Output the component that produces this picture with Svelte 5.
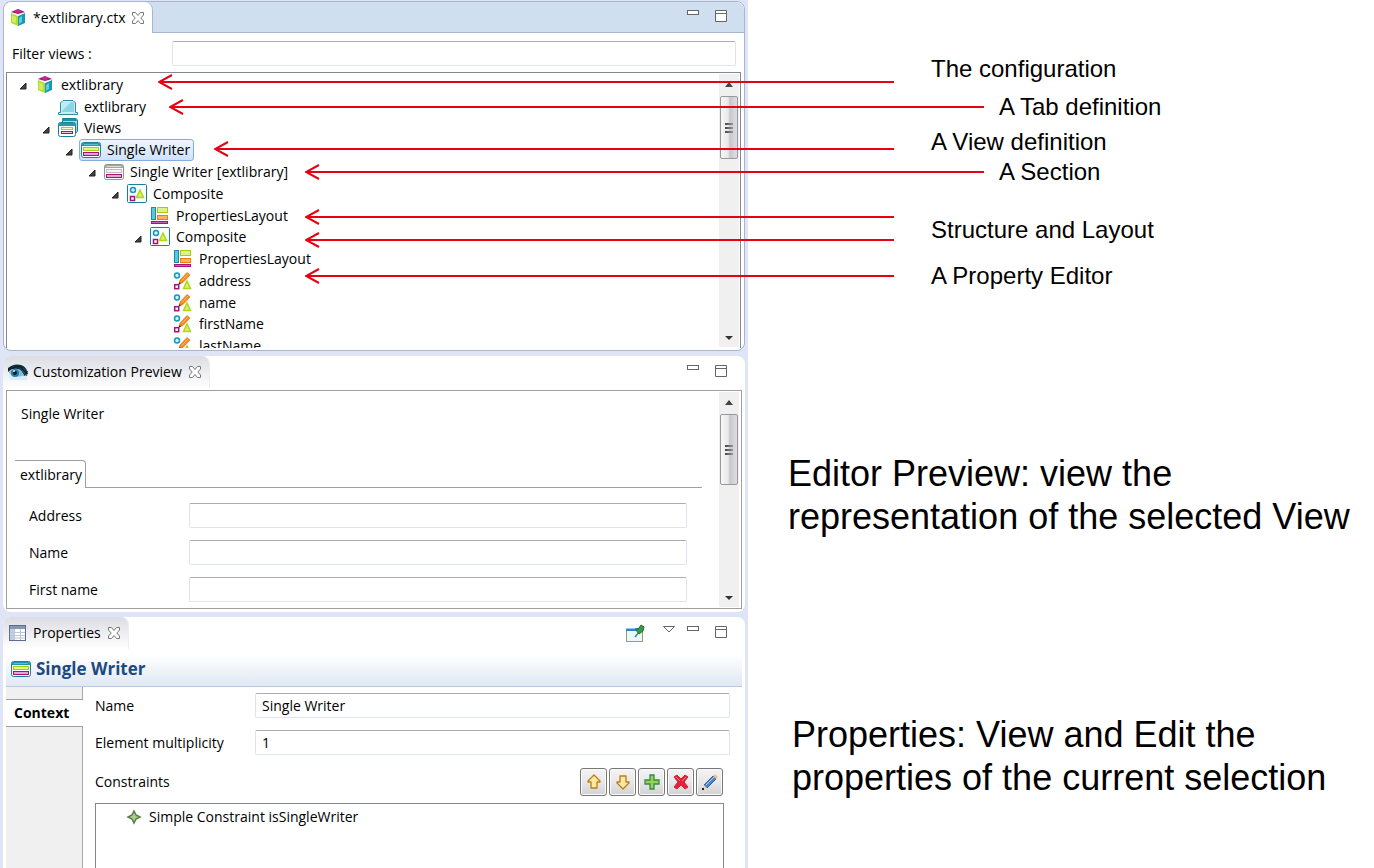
<script>
  const tree = [
    { level: 0, icon: 'cube', label: 'extlibrary', open: true },
    { level: 1, icon: 'tab', label: 'extlibrary' },
    { level: 1, icon: 'views', label: 'Views', open: true },
    { level: 2, icon: 'view', label: 'Single Writer', open: true },
    { level: 3, icon: 'section', label: 'Single Writer [extlibrary]', open: true },
    { level: 4, icon: 'composite', label: 'Composite', open: true },
    { level: 5, icon: 'layout', label: 'PropertiesLayout' },
    { level: 5, icon: 'composite', label: 'Composite', open: true },
    { level: 6, icon: 'layout', label: 'PropertiesLayout' },
    { level: 6, icon: 'editor', label: 'address' },
    { level: 6, icon: 'editor', label: 'name' },
    { level: 6, icon: 'editor', label: 'firstName' },
    { level: 6, icon: 'editor', label: 'lastName' }
  ];
  let selected = $state(3);
  let filter = $state('');
  let name = $state('Single Writer');
  let multiplicity = $state('1');

  const previewFields = [
    { id: 'p-address', label: 'Address' },
    { id: 'p-name', label: 'Name' },
    { id: 'p-first', label: 'First name' }
  ];

  const arrows = [
    { x: 158, y: 82 },
    { x: 169, y: 107, long: true },
    { x: 214, y: 149 },
    { x: 305, y: 172, long: true },
    { x: 305, y: 217 },
    { x: 305, y: 240 },
    { x: 305, y: 276 }
  ];

  const actions = [
    { icon: 'up', label: 'Move up' },
    { icon: 'down', label: 'Move down' },
    { icon: 'add', label: 'Add' },
    { icon: 'remove', label: 'Remove' },
    { icon: 'edit', label: 'Edit' }
  ];
</script>

{#snippet icon(kind)}
  <svg class="icon" viewBox="0 0 20 20" aria-hidden="true">
    {#if kind === 'cube'}
      <path d="M3 5 L10 8 V18 L3 15Z" fill="#b5dc28" />
      <path d="M17 5 L10 8 V18 L17 15Z" fill="#1599b8" />
      <path d="M11 10 L14 8 V14 L11 16Z" fill="#62cde2" />
      <path d="M4 7 L8 9 V15 L4 14Z" fill="#cdee60" />
      <path d="M2 4 L10 1 L18 4 L10 8Z" fill="#f3f3f3" />
      <path d="M3 4 L10 1 L17 4 L10 6Z" fill="#a8107c" />
      <path d="M7 2h6v2l-3 1-3-1z" fill="#c02c93" />
    {:else if kind === 'tab'}
      <path d="M.5 17.500 V15.500 H2.500 V6 L5 3.500 H15 L17.500 6 V15.500 H19.500 V17.500Z" fill="#c9edf5" stroke="#2d8ea3" />
      <path d="M4 6 L6 5 H14 L16 6 V15 H4Z" fill="#8bd5e7" />
      <path d="M4 14 L13 5 H6 L4 6Z" fill="#c2eaf3" />
    {:else if kind === 'views'}
      <path d="M4.500 .5H17q2.500 0 2.500 2.500V13l-2 2.500H4.500z" fill="#9fdbe8" stroke="#197f95" />
      <path d="M4 1H18L19 3H4Z" fill="#2190a7" />
      <rect x=".5" y="4.500" width="17" height="14" rx="2" fill="#fff" stroke="#197f95" />
      <path d="M1 8V5H17V8Z" fill="#2498b0" />
      <rect x="3.500" y="9.500" width="11" height="2" fill="#f6fbd9" stroke="#a8cf18" />
      <rect x="3.500" y="13.500" width="11" height="2" fill="#efc3e2" stroke="#a8107c" />
    {:else if kind === 'view' || kind === 'section'}
      {@const on = kind === 'view'}
      <rect x=".5" y="2.500" width="19" height="15" rx="2" fill="#fff" stroke={on ? '#1c8196' : '#929292'} />
      <path d="M1 6V4q0-1 1-1h16q1 0 1 1v2z" fill={on ? '#2397ae' : '#a5a5a5'} />
      <path d="M3 4.500h14" stroke={on ? '#5cbfd0' : '#dcdcdc'} />
      <rect x="2.500" y="7.500" width="15" height="3" fill={on ? '#dff48e' : '#f6f6f6'} stroke={on ? '#a3cc10' : '#bdbdbd'} />
      <rect x="2.500" y="12.500" width="15" height="3" fill="#dfa8d0" stroke="#a8107c" />
    {:else if kind === 'composite'}
      <rect x=".5" y=".5" width="19" height="18" rx="1" fill="#f8feff" stroke="#197f95" />
      <circle cx="6" cy="6" r="2.500" fill="#d0f1f8" stroke="#1599b8" stroke-width="1.500" />
      <rect x="3.500" y="12.500" width="4" height="4" fill="#fff" stroke="#a8107c" stroke-width="1.500" />
      <path d="M13 6 L16.500 13.500 H9.500Z" fill="#d7ef78" stroke="#b1d813" stroke-width="1.500" />
    {:else if kind === 'layout'}
      <rect x="1.500" y="1.500" width="4" height="12" fill="#5cc6dc" stroke="#188fa9" />
      <rect x="7.500" y="1.500" width="10" height="5" fill="#dcf28a" stroke="#a3cc10" />
      <rect x="7.500" y="9.500" width="10" height="4" fill="#ffb25e" stroke="#f07d10" />
      <rect x="1.500" y="15.500" width="16" height="2" fill="#c763aa" stroke="#a8107c" />
    {:else if kind === 'editor'}
      <circle cx="4" cy="4.500" r="2.500" fill="#d0f1f8" stroke="#1599b8" stroke-width="1.500" />
      <rect x="1.700" y="13.700" width="4" height="4" fill="#fff" stroke="#a8107c" stroke-width="1.500" />
      <path d="M14 10 L17.500 17.500 H10.500Z" fill="#d7ef78" stroke="#b1d813" stroke-width="1.500" />
      <path d="M6 13 L7 9 L14 1.500 L17 4 L10 11.500Z" fill="#f28a20" stroke="#d9741a" stroke-width=".7" />
      <path d="M9 9.500 L15 3" stroke="#ffc078" />
      <path d="M5.500 13.700 L6.500 11 L8 12.500Z" fill="#333" />
    {:else if kind === 'eye'}
      <path d="M0 2H19V18H2Z" fill="#d5edf6" />
      <path d="M0 6Q6 1 13 3Q19 5 20 12L16 14Q14 8 9 7Q4 6 0 10Z" fill="#162630" />
      <path d="M1 10Q5 6 10 7Q14 8 16 13Q9 17 2 12Z" fill="#78bfdd" />
      <circle cx="7" cy="11" r="4" fill="#287da7" />
      <circle cx="7" cy="11" r="2" fill="#081c29" />
      <circle cx="6" cy="9" r="1" fill="#def7ff" />
      <path d="M14 8L19 14M15 6L20 10M12 6L16 12" stroke="#23576e" />
    {:else if kind === 'table'}
      <rect x="1.500" y="2.500" width="16" height="15" fill="#fff" stroke="#5a6e91" />
      <rect x="2" y="3" width="15" height="3" fill="#8796b4" />
      <rect x="2" y="6" width="4" height="11" fill="#c5cede" />
      <path d="M6.500 6V17M12.500 6V17M2 9.500H17M2 12.500H17M2 15H17" stroke="#bcc6d6" />
    {:else if kind === 'pin'}
      <rect x="1.500" y="4.500" width="16" height="13" fill="#e8f9fd" stroke="#a19767" />
      <path d="M1 4H17V7H1Z" fill="#3e7ec1" />
      <path d="M1 4H10V5H1Z" fill="#9ccaf0" />
      <path d="M10 13L14 8" stroke="#5f7784" stroke-width="1.500" />
      <path d="M11 6L14 4L16 1L19 3L18 7L14 10Z" fill="#3b9945" stroke="#1d742d" />
    {:else if kind === 'up' || kind === 'down'}
      <path d={kind === 'up' ? 'M10 3L16 9V10H13V16H7V10H4V9Z' : 'M10 17L16 11V10H13V4H7V10H4V11Z'} fill="#ffe9a0" stroke="#bd7c18" stroke-width="1.300" stroke-linejoin="round" />
    {:else if kind === 'add'}
      <path d="M8 3H12V8H17V12H12V17H8V12H3V8H8Z" fill="#9bd053" stroke="#338a4a" stroke-width="1.300" />
    {:else if kind === 'remove'}
      <path d="M3 5L6 3L10 7L14 3L17 5L13 10L17 15L14 17L10 13L6 17L3 15L7 10Z" fill="#e5213c" stroke="#c22a36" />
      <path d="M5 5L9 9M15 5L11 9" stroke="#f58179" />
    {:else if kind === 'edit'}
      <path d="M4 13L13 4L16 7L7 16Z" fill="#4e87ce" stroke="#315b9f" />
      <path d="M6 13L14 5" stroke="#a7d2f5" />
      <path d="M13 4L15 2L18 5L16 7Z" fill="#edc283" />
      <path d="M4 13L7 16L3 17Z" fill="#efd49c" /><path d="M2 16h2v2H2z" fill="#222" />
    {:else if kind === 'star'}
      <path d="M10 4L12 8L16 10L12 12L10 16L8 12L4 10L8 8Z" fill="#a8cd8c" stroke="#5b7e45" stroke-width="1.500" />
    {/if}
  </svg>
{/snippet}

{#snippet close()}
  <button class="plain close" aria-label="Close">
    <svg viewBox="0 0 14 14" width="14" height="14"><path d="M1.500 1.500H4.500L7 4.500L9.500 1.500H12.500V4L9.800 7L12.500 10V12.500H9.500L7 9.500L4.500 12.500H1.500V10L4.200 7L1.500 4Z" fill="#fff" stroke="#777" /></svg>
  </button>
{/snippet}

{#snippet windowTools()}
  <button class="plain" aria-label="Minimize">
    <svg viewBox="0 0 14 14" width="14" height="14"><rect x="1.500" y="1.500" width="11" height="4" fill="#fff" stroke="#666" /></svg>
  </button>
  <button class="plain" aria-label="Maximize">
    <svg viewBox="0 0 14 14" width="14" height="14"><path d="M1.500 1.500H12.500V12.500H1.500ZM1.500 4.500H12.500" fill="#fff" stroke="#666" /></svg>
  </button>
{/snippet}

{#snippet scrollbar(size)}
  <div class="scrollbar" aria-hidden="true">
    <svg width="10" height="6" viewBox="0 0 10 6"><path d="M5 0L9 5H1Z" fill="#444" /></svg>
    <div class="thumb {size}"><i></i><i></i><i></i></div>
    <svg class="end" width="10" height="6" viewBox="0 0 10 6"><path d="M5 5L9 1H1Z" fill="#333" /></svg>
  </div>
{/snippet}

<main class="page">
  <div class="workbench">
    <section class="panel editor">
      <header class="bar">
        <div class="tab">{@render icon('cube')}<span>*extlibrary.ctx</span>{@render close()}</div>
        <div class="tools">{@render windowTools()}</div>
      </header>
      <div class="filter">
        <label for="filter">Filter views :</label>
        <input id="filter" type="text" bind:value={filter} />
      </div>
      <div class="box treebox">
        <ul class="tree" role="tree">
          {#each tree as node, i}
            <li role="treeitem" aria-selected={selected === i} aria-expanded={node.open} style="--level:{node.level}">
              <span class="twisty">
                {#if node.open}<svg width="8" height="8" viewBox="0 0 8 8"><path d="M7 1V7H1Z" fill="#444" stroke="#222" /></svg>{/if}
              </span>
              <button class="node" class:selected={selected === i} onclick={() => (selected = i)}>
                {@render icon(node.icon)}<span>{node.label}</span>
              </button>
            </li>
          {/each}
        </ul>
        {@render scrollbar('short')}
      </div>
    </section>

    <section class="panel preview">
      <header class="bar">
        <div class="tab">{@render icon('eye')}<span>Customization Preview</span>{@render close()}</div>
        <div class="tools">{@render windowTools()}</div>
      </header>
      <div class="box">
        <div class="sheet">
          <p>Single Writer</p>
          <div class="strip"><button class="plain striptab">extlibrary</button></div>
          <div class="fields">
            {#each previewFields as f}
              <label for={f.id}>{f.label}</label>
              <input id={f.id} type="text" />
            {/each}
          </div>
        </div>
        {@render scrollbar('long')}
      </div>
    </section>

    <section class="panel properties">
      <header class="bar">
        <div class="tab">{@render icon('table')}<span>Properties</span>{@render close()}</div>
        <div class="tools">
          <button class="plain pin" aria-label="Pin to selection">{@render icon('pin')}</button>
          <button class="plain menu" aria-label="View menu">
            <svg viewBox="0 0 14 14" width="14" height="14"><path d="M1.500 1.500H12.500L7 7Z" fill="#fff" stroke="#666" /></svg>
          </button>
          {@render windowTools()}
        </div>
      </header>
      <h2>{@render icon('view')}<span>Single Writer</span></h2>
      <div class="body">
        <nav><button class="category">Context</button></nav>
        <div class="form">
          <div class="fields">
            <label for="name">Name</label>
            <input id="name" type="text" bind:value={name} />
            <label for="mult">Element multiplicity</label>
            <input id="mult" type="text" bind:value={multiplicity} />
          </div>
          <div class="constraints">
            <span>Constraints</span>
            <div class="actions">
              {#each actions as a}
                <button aria-label={a.label}>{@render icon(a.icon)}</button>
              {/each}
            </div>
          </div>
          <ul class="list"><li>{@render icon('star')}<span>Simple Constraint isSingleWriter</span></li></ul>
        </div>
      </div>
    </section>
  </div>

  <aside class="notes">
    <ul class="callouts">
      <li>The configuration</li>
      <li class="far">A Tab definition</li>
      <li>A View definition</li>
      <li class="far">A Section</li>
      <li>Structure and Layout</li>
      <li>A Property Editor</li>
    </ul>
    <p class="about">Editor Preview: view the<br />representation of the selected View</p>
    <p class="about second">Properties: View and Edit the<br />properties of the current selection</p>
  </aside>

  {#each arrows as a}
    <div class="arrow" class:long={a.long} style="left:{a.x}px;top:{a.y - 8}px">
      <svg width="16" height="16" viewBox="0 0 16 16"><path d="M14 1L1 8L14 15" fill="none" stroke="#e60012" stroke-width="2" /></svg>
    </div>
  {/each}
</main>

<style>
  :global(body) { margin: 0; background: #fff; }
  * { box-sizing: border-box; }
  ul, p, h2 { margin: 0; padding: 0; list-style: none; }
  .page {
    position: relative;
    display: grid;
    grid-template-columns: 748fr 626fr;
    height: 100vh;
    overflow: hidden;
    color: #000;
    font: 14px/20px "Open Sans", "Noto Sans", sans-serif;
  }
  button, input { font: inherit; color: inherit; }
  .plain { border: 0; padding: 0; background: none; display: flex; }
  .icon { width: 20px; height: 20px; flex: none; }
  svg { display: block; flex: none; }

  .workbench {
    display: flex;
    flex-direction: column;
    gap: 5px;
    min-height: 0;
    padding: 1px 3px 0;
    background: #dfe5f6;
  }
  .panel {
    display: flex;
    flex-direction: column;
    background: #fff;
    border-radius: 8px;
    padding: 0 3px 3px;
  }
  .bar { display: flex; justify-content: space-between; height: 34px; margin: 0 -3px; flex: none; }
  .tab {
    display: flex;
    align-items: center;
    gap: 5px;
    height: 32px;
    padding: 0 7px 0 5px;
    border-radius: 8px 8px 0 0;
    background: linear-gradient(#dcdde3, #fff);
    border-right: 1px solid #ecedf2;
    white-space: nowrap;
  }
  .close { margin-left: 1px; }
  .tools { display: flex; gap: 14px; padding: 8px 17px 0 0; }
  .pin { margin: -1px 3px 0 0; height: 20px; }
  .menu { margin-right: -4px; }
  .box { display: flex; border: 1px solid #a0a0a4; padding: 2px; }

  .editor { height: 350px; border: 1px solid #a9b5cd; padding: 0 3px 2px 2px; }
  .editor .bar {
    height: 31px;
    margin: 0 -3px 0 -2px;
    background: #cfdfef;
    border-bottom: 1px solid #a9b5cd;
    border-radius: 8px 8px 0 0;
  }
  .editor .tab { height: 31px; background: #fff; border-right: 1px solid #a9b5cd; padding-left: 4px; }
  .editor .tools { padding: 7px 16px 0 0; }
  .filter { display: grid; grid-template-columns: 160px 1fr; align-items: center; padding: 8px 5px 6px 6px; }
  input {
    width: 100%;
    height: 25px;
    padding: 0 6px;
    border: 1px solid #dfe3ec;
    border-top-color: #abadb3;
    border-radius: 2px;
    background: #fff;
    outline: 0;
  }
  .treebox { flex: 1; min-height: 0; overflow: hidden; border-color: #828790; border-bottom: 0; padding: 1px 1px 1px 0; }
  .tree {
    display: grid;
    grid-auto-rows: 1fr;
    height: 283px;
    flex: 1;
  }
  .tree li { display: flex; align-items: center; padding-left: calc(12px + 23px * var(--level)); min-height: 0; }
  .twisty { width: 14px; padding-top: 3px; }
  .node {
    display: flex;
    align-items: center;
    gap: 6px;
    height: 22px;
    padding: 0 3px 0 1px;
    border: 1px solid transparent;
    border-radius: 3px;
    background: none;
    white-space: nowrap;
  }
  .node.selected { border-color: #84acdd; background: linear-gradient(#eef5fe, #cfe2fb); }

  .scrollbar {
    display: flex;
    flex-direction: column;
    align-items: center;
    gap: 8px;
    width: 20px;
    padding: 8px 0 6px;
    background: #f0f0f1;
    flex: none;
  }
  .end { margin-top: auto; }
  .thumb {
    display: flex;
    flex-direction: column;
    align-items: center;
    justify-content: center;
    gap: 2px;
    width: 18px;
    border: 1px solid #98989c;
    border-radius: 2px;
    background: linear-gradient(90deg, #f7f7f7, #e8e8ea 45%, #c6c6cc 55%, #dedee2);
  }
  .thumb i { width: 8px; height: 2px; background: linear-gradient(90deg, #444, #999); }
  .short { height: 63px; }
  .long { height: 71px; }

  .preview { height: 256px; }
  .preview .box { flex: 1; min-height: 0; padding: 1px 2px; }
  .sheet { flex: 1; padding: 12px 17px 0 6px; }
  .sheet p { padding-left: 6px; }
  .strip { display: flex; margin-top: 36px; }
  .strip::after { content: ""; flex: 1; border-bottom: 1px solid #a0a0a0; }
  .striptab {
    height: 28px;
    align-items: center;
    padding: 0 3px 0 5px;
    border-top: 1px solid #a0a0a0;
    border-right: 1px solid #a0a0a0;
    border-radius: 0 4px 0 0;
  }
  .fields { display: grid; grid-template-columns: 160px 1fr; align-items: center; row-gap: 12px; }
  .sheet .fields { padding: 15px 15px 0 14px; }

  .properties { flex: 1; min-height: 0; padding-bottom: 0; border-radius: 8px 8px 0 0; }
  h2 {
    display: flex;
    align-items: center;
    gap: 5px;
    height: 36px;
    padding-left: 5px;
    color: #1b4a80;
    font: bold 17px/24px "Open Sans", "Noto Sans", sans-serif;
    background: linear-gradient(#fff 10%, #e0e8f3);
    border-bottom: 1px solid #b5cbe2;
    flex: none;
  }
  .body { display: flex; flex: 1; min-height: 0; }
  nav { width: 77px; background: #f0f0f0; border-right: 1px solid #a8a8a8; padding-top: 12px; flex: none; }
  .category {
    display: flex;
    align-items: center;
    width: 77px;
    height: 28px;
    padding: 0 0 0 8px;
    font-weight: bold;
    background: #fff;
    border: 1px solid #a0a0a0;
    border-width: 1px 0;
  }
  .form { display: flex; flex-direction: column; flex: 1; padding: 6px 12px 0; }
  .form .fields { padding-bottom: 13px; }
  .constraints { display: flex; align-items: center; justify-content: space-between; padding-right: 7px; }
  .actions { display: flex; gap: 2px; }
  .actions button {
    display: flex;
    align-items: center;
    justify-content: center;
    width: 27px;
    height: 28px;
    padding: 0;
    border: 1px solid #777;
    border-radius: 3px;
    background: linear-gradient(#f4f4f4, #e8e8e8 50%, #d2d2d2);
    box-shadow: inset 0 0 0 1px #fafafa;
  }
  .list { flex: 1; margin: 7px 6px 0 0; border: 1px solid #828790; border-bottom: 0; padding: 3px 28px; }
  .list li { display: flex; align-items: center; gap: 5px; }

  .notes { font: 24px/30px "Liberation Sans", Arial, sans-serif; white-space: nowrap; }
  .callouts { display: grid; grid-template-rows: 38px 35px 30px 58px 46px 30px; padding: 54px 0 0 183px; }
  .far { padding-left: 68px; }
  .about { padding: 161px 0 0 40px; font-size: 36px; line-height: 43px; }
  .second { padding: 175px 0 0 44px; }

  .arrow { position: absolute; right: calc(45.56% - 146px); height: 16px; pointer-events: none; }
  .arrow.long { right: calc(45.56% - 236px); }
  .arrow::after { content: ""; position: absolute; inset: 7px 0 auto 2px; height: 2px; background: #e60012; }
</style>
